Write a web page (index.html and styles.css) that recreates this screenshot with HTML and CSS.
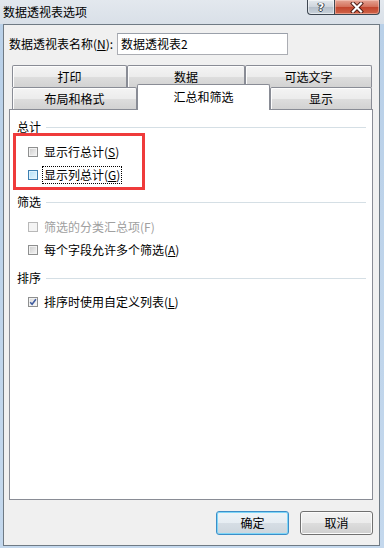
FILE: index.html
```html
<!DOCTYPE html>
<html lang="zh-CN">
<head>
<meta charset="utf-8">
<title>数据透视表选项</title>
<link rel="stylesheet" href="styles.css">
</head>
<body>
<div class="window">
  <div class="titlebar">
    <span class="title">数据透视表选项</span>
    <div class="caption">
      <div class="cbtn help"><span class="qmark">?</span></div>
      <div class="cbtn close">
        <svg width="14" height="11" viewBox="0 0 14 11">
          <path d="M3 1.5 L11 9.5 M11 1.5 L3 9.5" stroke="#4a1a12" stroke-width="4" stroke-linecap="square" fill="none"/>
          <path d="M3 1.5 L11 9.5 M11 1.5 L3 9.5" stroke="#ffffff" stroke-width="2.2" stroke-linecap="square" fill="none"/>
        </svg>
      </div>
    </div>
  </div>
  <div class="client">
    <div class="name-row">
      <span class="name-label">数据透视表名称(<u>N</u>):</span>
      <div class="name-input">数据透视表2</div>
    </div>
    <div class="tabs">
      <div class="tab-row">
        <div class="tab w-print">打印</div>
        <div class="tab w-data">数据</div>
        <div class="tab w-alt">可选文字</div>
      </div>
      <div class="tab-row">
        <div class="tab w-layout">布局和格式</div>
        <div class="tab active w-totals">汇总和筛选</div>
        <div class="tab w-display">显示</div>
      </div>
      <div class="panel">
        <div class="group-head first">总计</div>
        <div class="highlight">
          <div class="check-row">
            <span class="cb"></span>
            <span class="lbl">显示行总计(<u>S</u>)</span>
          </div>
          <div class="check-row">
            <span class="cb hot"></span>
            <span class="lbl focus">显示列总计(<u>G</u>)</span>
          </div>
        </div>
        <div class="group-head filter">筛选</div>
        <div class="check-row plain disabled-row">
          <span class="cb disabled"></span>
          <span class="lbl">筛选的分类汇总项(F)</span>
        </div>
        <div class="check-row plain gap3">
          <span class="cb"></span>
          <span class="lbl">每个字段允许多个筛选(<u>A</u>)</span>
        </div>
        <div class="group-head sort">排序</div>
        <div class="check-row plain sort-row">
          <span class="cb checked">
            <svg width="8" height="8" viewBox="0 0 8 8"><path d="M1.2 4.2 L3.1 6.3 L6.9 1.2" stroke="#3d5a9e" stroke-width="1.5" fill="none"/></svg>
          </span>
          <span class="lbl">排序时使用自定义列表(<u>L</u>)</span>
        </div>
      </div>
    </div>
    <div class="buttons">
      <div class="btn default">确定</div>
      <div class="btn">取消</div>
    </div>
  </div>
</div>
</body>
</html>
```
FILE: styles.css
```css
html, body {
  margin: 0;
  padding: 0;
}
body {
  font-family: "Noto Sans CJK SC", "Microsoft YaHei", sans-serif;
  font-size: 12px;
  color: #000;
}
u {
  text-decoration: underline;
  text-underline-offset: 1px;
}
.window {
  width: 384px;
  height: 548px;
  box-sizing: border-box;
  padding: 0 4px 2px 3px;
  display: flex;
  flex-direction: column;
  background: linear-gradient(to bottom, #e3e8ee 0, #d9e0e8 24px, #b9d0e8 24px, #c4d8ed 100%);
}
.titlebar {
  height: 24px;
  flex: none;
  display: flex;
  align-items: flex-start;
}
.title {
  margin-top: 4px;
  line-height: 16px;
}
.caption {
  margin-left: auto;
  display: flex;
}
.cbtn {
  height: 15px;
  box-sizing: border-box;
  border: 1px solid #3e4752;
  border-top: none;
  display: flex;
  align-items: center;
  justify-content: center;
}
.help {
  width: 27px;
  border-right: none;
  border-radius: 0 0 0 4px;
  background: linear-gradient(#e4e9ee, #cdd4dc 50%, #b5bfca 50%, #c8d1da);
  box-shadow: inset 0 0 0 1px rgba(255,255,255,0.5);
}
.qmark {
  color: #fff;
  font-family: "DejaVu Sans", sans-serif;
  font-weight: bold;
  font-size: 11px;
  line-height: 13px;
  text-shadow: 0 0 1px #39424d, 0 0 1px #39424d, 1px 0 0 #39424d, -1px 0 0 #39424d, 0 1px 0 #39424d;
}
.close {
  width: 46px;
  border-radius: 0 0 4px 0;
  background: linear-gradient(#e5a595, #d36f59 50%, #c1442c 50%, #d06348);
  box-shadow: inset 0 0 0 1px rgba(255,220,210,0.45);
}
.client {
  flex: 1;
  min-height: 0;
  border: 1px solid #6f7a84;
  background: #f0f0f0;
  display: flex;
  flex-direction: column;
}
.name-row {
  display: flex;
  align-items: center;
  height: 22px;
  margin: 8px 0 0 5px;
}
.name-label {
  width: 108px;
  line-height: 16px;
}
.name-input {
  width: 171px;
  height: 22px;
  box-sizing: border-box;
  border: 1px solid #abadb3;
  border-top-color: #9aa0aa;
  background: #fff;
  padding-left: 3px;
  line-height: 20px;
}
.tabs {
  margin: 10px 0 0 5px;
  width: 364px;
}
.tab-row {
  display: flex;
  align-items: flex-start;
  height: 22px;
  padding-left: 3px;
}
.tab {
  box-sizing: border-box;
  height: 22px;
  border: 1px solid #898c95;
  border-bottom: none;
  border-radius: 2px 2px 0 0;
  background: linear-gradient(#f4f4f4, #ececec 50%, #dedede 50%, #d2d2d2);
  box-shadow: inset 1px 1px 0 #fdfdfd;
  text-align: center;
  line-height: 21px;
}
.w-print { width: 115px; }
.w-data { width: 118px; }
.w-alt { width: 127px; }
.w-layout { width: 125px; }
.w-totals { width: 133px; }
.w-display { width: 102px; }
.tab.active {
  height: 26px;
  margin-top: -3px;
  background: #fff;
  box-shadow: none;
  line-height: 24px;
  position: relative;
  z-index: 1;
}
.panel {
  height: 391px;
  box-sizing: border-box;
  border: 1px solid #898c95;
  background: #fff;
  padding: 0 6px 0 3px;
}
.group-head {
  display: flex;
  align-items: center;
  height: 14px;
  line-height: 14px;
  padding-left: 4px;
}
.group-head::after {
  content: "";
  flex: 1;
  height: 1px;
  background: #d5dfe5;
  margin-left: 5px;
}
.group-head.first { margin-top: 10px; }
.group-head.filter { margin-top: 5px; }
.group-head.sort { margin-top: 11px; }
.highlight {
  width: 132px;
  box-sizing: border-box;
  border: 3px solid #ef3b3b;
  margin-top: -1px;
  padding: 6px 0 2px 12px;
  display: flex;
  flex-direction: column;
  gap: 3px;
}
.check-row {
  display: flex;
  align-items: center;
  height: 20px;
}
.check-row.plain { padding-left: 15px; }
.disabled-row { margin-top: 8px; color: #a0a0a0; }
.gap3 { margin-top: 3px; }
.sort-row { margin-top: 7px; }
.lbl {
  line-height: 16px;
  white-space: nowrap;
}
.cb {
  width: 10px;
  height: 10px;
  flex: none;
  box-sizing: border-box;
  border: 1px solid #8e8f8f;
  background: linear-gradient(135deg, #cbcbcb, #f7f7f7);
  box-shadow: inset 0 0 0 1px #f2f2f2;
  margin-right: 6px;
  display: flex;
  align-items: center;
  justify-content: center;
}
.cb.hot {
  border-color: #3c7fb1;
  background: linear-gradient(135deg, #b2dff7, #e5f5fd);
  box-shadow: inset 0 0 0 1px #dff2fc;
}
.cb.disabled {
  border-color: #b8b8b8;
  background: #f4f4f4;
  box-shadow: none;
}
.cb.checked {
  background: linear-gradient(135deg, #d8d8d8, #fafafa);
}
.focus {
  border: 1px dotted #000;
  padding: 0 1px;
  margin-left: -2px;
}
.buttons {
  display: flex;
  justify-content: flex-end;
  gap: 11px;
  margin-top: 11px;
  padding-right: 6px;
}
.btn {
  width: 73px;
  height: 24px;
  box-sizing: border-box;
  border: 1px solid #707070;
  border-radius: 3px;
  background: linear-gradient(#f2f2f2, #ebebeb 50%, #dddddd 50%, #cfcfcf);
  box-shadow: inset 0 0 0 1px #fbfbfb;
  text-align: center;
  line-height: 22px;
}
.btn.default {
  border-color: #3c8ec8;
  box-shadow: inset 0 0 0 1px #7fd6f7;
  background: linear-gradient(#eef4f8, #e6edf2 50%, #d6dee5 50%, #cdd6dd);
}
```
